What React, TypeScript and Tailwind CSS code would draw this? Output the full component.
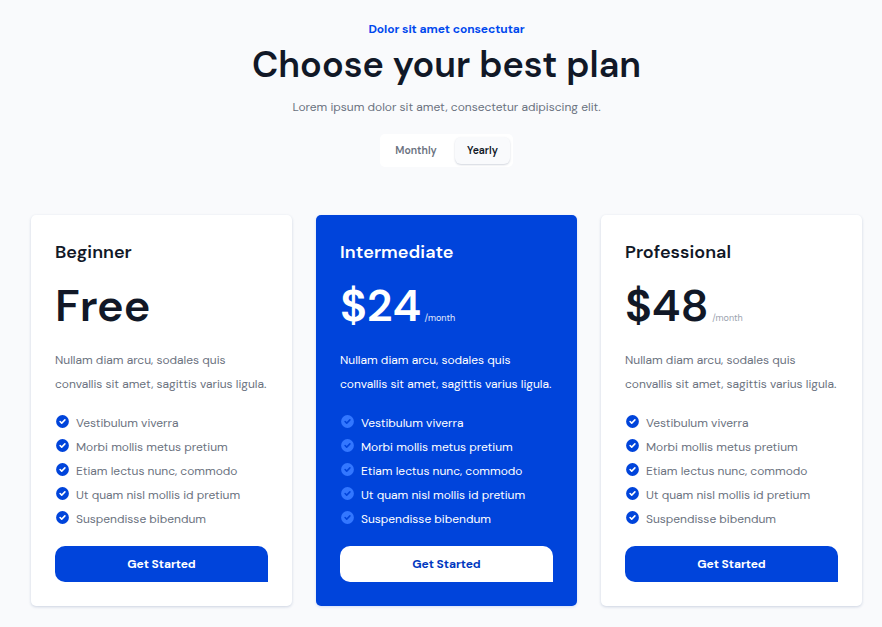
import React from "react";

type Plan = {
  name: string;
  price: string;
  period?: string;
  featured?: boolean;
};

const plans: Plan[] = [
  { name: "Beginner", price: "Free" },
  { name: "Intermediate", price: "$24", period: "/month", featured: true },
  { name: "Professional", price: "$48", period: "/month" },
];

const features = [
  "Vestibulum viverra",
  "Morbi mollis metus pretium",
  "Etiam lectus nunc, commodo",
  "Ut quam nisl mollis id pretium",
  "Suspendisse bibendum",
];

function CheckCircle({ className }: { className: string }) {
  return (
    <svg viewBox="0.625 0.625 18.75 18.75" fill="currentColor" className={`h-[15px] w-[15px] shrink-0 ${className}`} aria-hidden="true">
      <path
        fillRule="evenodd"
        clipRule="evenodd"
        d="M10 18a8 8 0 100-16 8 8 0 000 16zm3.707-9.293a1 1 0 00-1.414-1.414L9 10.586 7.707 9.293a1 1 0 00-1.414 1.414l2 2a1 1 0 001.414 0l4-4z"
      />
    </svg>
  );
}

function PlanCard({ plan }: { plan: Plan }) {
  const f = plan.featured;
  return (
    <article
      className={`flex h-[391px] flex-col rounded-[5px] px-6 pt-6 ${
        f
          ? "bg-[#0044db] text-white shadow-[0_1px_3px_rgba(0,68,219,0.15)]"
          : "bg-white text-[#111827] shadow-[0_1px_3px_rgba(30,60,120,0.2)]"
      }`}
    >
      <h2 className={`h-[27px] text-[18px] leading-[27px] font-semibold whitespace-nowrap ${f ? "tracking-[0.08px]" : "tracking-[0.02px]"}`}>
        {plan.name}
      </h2>
      <div className="mt-4 flex h-[48px] items-baseline gap-[3.5px] whitespace-nowrap">
        <span className="text-[45px] leading-[48px] font-semibold">{plan.price}</span>
        {plan.period && <span className={`text-[9px] ${f ? "text-white/90" : "text-[#9ca3af]"}`}>{plan.period}</span>}
      </div>
      <p className={`mt-[18px] text-[12px] leading-6 ${f ? "text-white" : "text-[#6b7280]"}`}>
        <span className="block tracking-[-0.01px] whitespace-nowrap">Nullam diam arcu, sodales quis</span>
        <span className="block tracking-[-0.025px] whitespace-nowrap">convallis sit amet, sagittis varius ligula.</span>
      </p>
      <ul className="mt-[15px]">
        {features.map((item) => (
          <li key={item} className="flex h-6 gap-[6px] text-[12px] leading-6 tracking-[-0.015px] whitespace-nowrap">
            <CheckCircle className={`mt-[3px] ${f ? "text-[#3377ff]" : "text-[#0044db]"}`} />
            <span className={f ? "text-white" : "text-[#6b7280]"}>{item}</span>
          </li>
        ))}
      </ul>
      <button
        className={`mt-[15px] h-9 w-full rounded-[10px] rounded-br-none text-[12px] font-bold tracking-[-0.06px] ${
          f ? "bg-white text-[#0038c0]" : "bg-[#0044db] text-white"
        }`}
      >
        Get Started
      </button>
    </article>
  );
}

export default function App() {
  return (
    <main className="h-[627px] w-[882px] overflow-hidden bg-[#f9fafc] font-['DM_Sans',Inter,sans-serif] text-[#111827] [font-optical-sizing:none]">
      <header className="flex flex-col items-center pt-[19px] pl-[11px] whitespace-nowrap">
        <p className="h-5 text-[12px] leading-5 font-bold tracking-[-0.06px] text-[#0048ee]">Dolor sit amet consectutar</p>
        <h1 className="mt-[5px] h-[42px] text-[36px] leading-[42px] font-semibold tracking-[0.04px]">Choose your best plan</h1>
        <p className="mt-[9px] h-6 text-[12px] leading-6 tracking-[-0.01px] text-[#6b7280]">Lorem ipsum dolor sit amet, consectetur adipiscing elit.</p>
        <div className="mt-[15px] flex h-[33px] w-[133px] rounded-[5px] bg-white p-[3px] text-[10.5px] font-semibold">
          <button className="h-[27px] w-[66px] text-[#6b7280]">Monthly</button>
          <button className="ml-[6px] h-[27px] w-[55px] rounded-[6px] bg-[#f9fafc] shadow-[0_1px_2px_rgba(30,50,90,0.2)]">Yearly</button>
        </div>
      </header>
      <section className="mt-[48px] ml-[31px] grid w-[831px] grid-cols-3 gap-6">
        {plans.map((plan) => (
          <PlanCard key={plan.name} plan={plan} />
        ))}
      </section>
    </main>
  );
}
